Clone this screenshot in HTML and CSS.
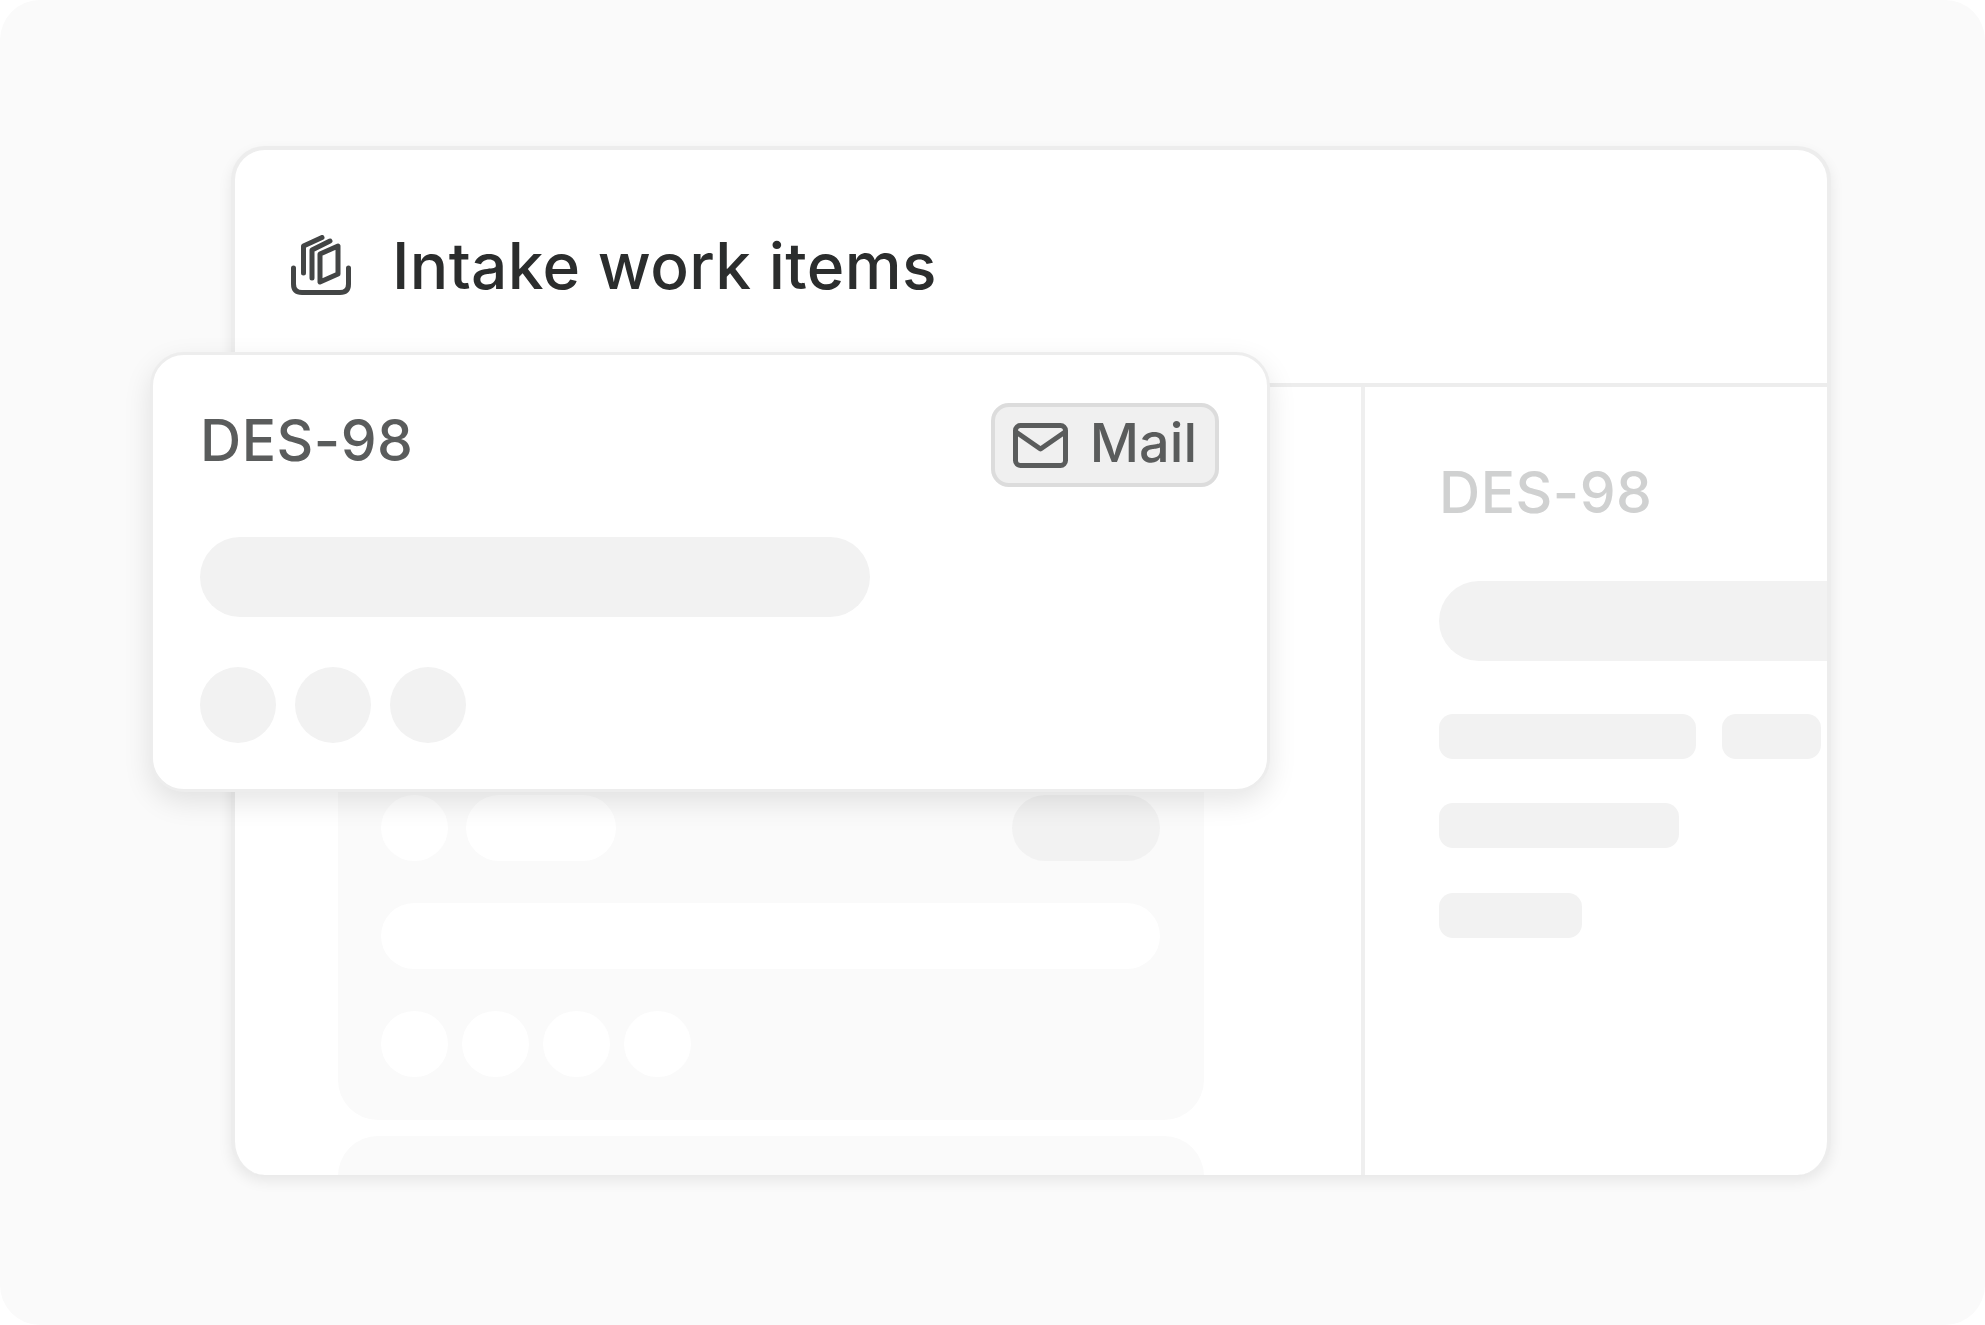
FILE: index.html
```html
<!DOCTYPE html>
<html>
<head>
<link rel="stylesheet" href="styles.css">
</head>
<body>

<div class="stage">
  <div class="window">
    <div class="window-head">
      <svg class="intake-icon" width="60" height="60" viewBox="0 0 60 60" fill="none">
        <path d="M2.5 33V49Q2.5 57.5 11 57.5H49Q57.5 57.5 57.5 49V33"/>
        <path d="M12.5 38V11L31 2.5"/>
        <path d="M21 43V15L39 6"/>
        <path d="M29 19L47 11V39L29 47Z"/>
      </svg>
      <h1 class="title">Intake work items</h1>
    </div>
    <div class="window-body">
      <div class="list-col">
        <div class="panel">
          <div class="panel-row">
            <span class="blob dot"></span>
            <span class="blob short"></span>
            <span class="blob status"></span>
          </div>
          <div class="blob wide"></div>
          <div class="dots">
            <span class="blob dot"></span>
            <span class="blob dot"></span>
            <span class="blob dot"></span>
            <span class="blob dot"></span>
          </div>
        </div>
        <div class="panel panel-next"></div>
      </div>
      <div class="detail-col">
        <div class="detail-id">DES-98</div>
        <div class="detail-title"></div>
        <div class="detail-tags">
          <span class="tag tag-a"></span>
          <span class="tag tag-b"></span>
        </div>
        <div class="tag tag-c"></div>
        <div class="tag tag-d"></div>
      </div>
    </div>
  </div>

  <div class="card">
    <div class="card-head">
      <span class="card-id">DES-98</span>
      <span class="badge">
        <svg class="mail-icon" width="55" height="45" viewBox="0 0 55 45" fill="none">
          <rect x="2.5" y="2.5" width="50" height="40" rx="5"/>
          <path d="M3 9L27.5 26L52 9"/>
        </svg>
        <span class="badge-text">Mail</span>
      </span>
    </div>
    <div class="card-bar"></div>
    <div class="card-dots">
      <span class="card-dot"></span>
      <span class="card-dot"></span>
      <span class="card-dot"></span>
    </div>
  </div>
</div>

</body>
</html>
```

FILE: styles.css
```css
html, body {
  margin: 0;
  background-color: #fff;
}

body {
  font-family: Inter, "Noto Sans", sans-serif;
}

.stage {
  position: relative;
  width: 1985px;
  height: 1325px;
  box-sizing: border-box;
  padding: 146px 154px 0 231px;
  background-color: #fafafa;
  border-radius: 40px;
  overflow: hidden;
}

/* main window behind the card */
.window {
  height: 1029px;
  box-sizing: border-box;
  display: flex;
  flex-direction: column;
  background-color: #fff;
  border: 4px solid #ededed;
  border-bottom: none;
  border-radius: 34px;
  box-shadow: 0 6px 14px rgba(0, 0, 0, 0.08);
  overflow: hidden;
}

.window-head {
  height: 237px;
  flex-shrink: 0;
  box-sizing: border-box;
  display: flex;
  align-items: center;
  gap: 41px;
  padding: 0 0 4px 56px;
  border-bottom: 4px solid #ededed;
}

.intake-icon path {
  stroke: #434545;
  stroke-width: 5;
  stroke-linecap: round;
  stroke-linejoin: round;
}

.title {
  margin: 2px 0 0;
  font-size: 64px;
  font-weight: 500;
  letter-spacing: 0.35px;
  color: #2b2d2d;
}

.window-body {
  flex: 1;
  display: flex;
  min-height: 0;
}

.list-col {
  width: 1130px;
  flex-shrink: 0;
  box-sizing: border-box;
  padding: 365px 0 0 103px;
  display: flex;
  flex-direction: column;
  gap: 16px;
  border-right: 4px solid #efefef;
  overflow: hidden;
}

.panel {
  width: 866px;
  flex-shrink: 0;
  box-sizing: border-box;
  padding: 43px 44px 43px 43px;
  display: flex;
  flex-direction: column;
  gap: 42px;
  background-color: #fafafa;
  border-radius: 40px;
}

.panel-next {
  height: 120px;
}

.panel-row {
  display: flex;
  align-items: center;
  gap: 18px;
}

.dots {
  display: flex;
  gap: 14px;
}

.blob {
  display: block;
  height: 66px;
  background-color: #fff;
  border-radius: 33px;
}

.blob.dot {
  width: 67px;
}

.blob.short {
  width: 150px;
}

.blob.status {
  width: 148px;
  margin-left: auto;
  background-color: #f2f2f2;
}

.detail-col {
  flex: 1;
  min-width: 0;
  padding: 72px 0 0 74px;
  overflow: hidden;
}

.detail-id {
  font-size: 57px;
  font-weight: 500;
  line-height: 68px;
  letter-spacing: 0.5px;
  color: #d0d1d1;
}

.detail-title {
  height: 80px;
  margin-top: 54px;
  width: 600px;
  background-color: #f2f2f2;
  border-radius: 40px;
}

.detail-tags {
  display: flex;
  gap: 26px;
  margin-top: 53px;
}

.tag {
  display: block;
  height: 45px;
  background-color: #f2f2f2;
  border-radius: 14px;
}

.tag-a {
  width: 257px;
}

.tag-b {
  width: 99px;
}

.tag-c {
  width: 240px;
  margin-top: 44px;
}

.tag-d {
  width: 143px;
  margin-top: 45px;
}

/* floating card */
.card {
  position: absolute;
  left: 150px;
  top: 352px;
  width: 1120px;
  height: 440px;
  box-sizing: border-box;
  padding: 48px 48px 0 47px;
  background-color: #fff;
  border: 3px solid #ededed;
  border-radius: 34px;
  box-shadow: 0 10px 28px rgba(0, 0, 0, 0.1);
}

.card-head {
  display: flex;
  align-items: flex-start;
  justify-content: space-between;
}

.card-id {
  font-size: 57px;
  font-weight: 500;
  line-height: 76px;
  letter-spacing: 0.5px;
  color: #5a5c5c;
}

.badge {
  display: flex;
  align-items: center;
  gap: 22px;
  height: 84px;
  box-sizing: border-box;
  padding: 0 18px;
  font-size: 54px;
  font-weight: 500;
  color: #5a5c5c;
  background-color: #f0f0f0;
  border: 4px solid #dcdcdc;
  border-radius: 18px;
}

.badge-text {
  padding-bottom: 5px;
}

.mail-icon rect,
.mail-icon path {
  stroke: #5a5c5c;
  stroke-width: 5;
  stroke-linejoin: round;
  stroke-linecap: round;
}

.card-bar {
  width: 670px;
  height: 80px;
  margin-top: 50px;
  background-color: #f2f2f2;
  border-radius: 40px;
}

.card-dots {
  display: flex;
  gap: 19px;
  margin-top: 50px;
}

.card-dot {
  width: 76px;
  height: 76px;
  background-color: #f2f2f2;
  border-radius: 50%;
}
```
